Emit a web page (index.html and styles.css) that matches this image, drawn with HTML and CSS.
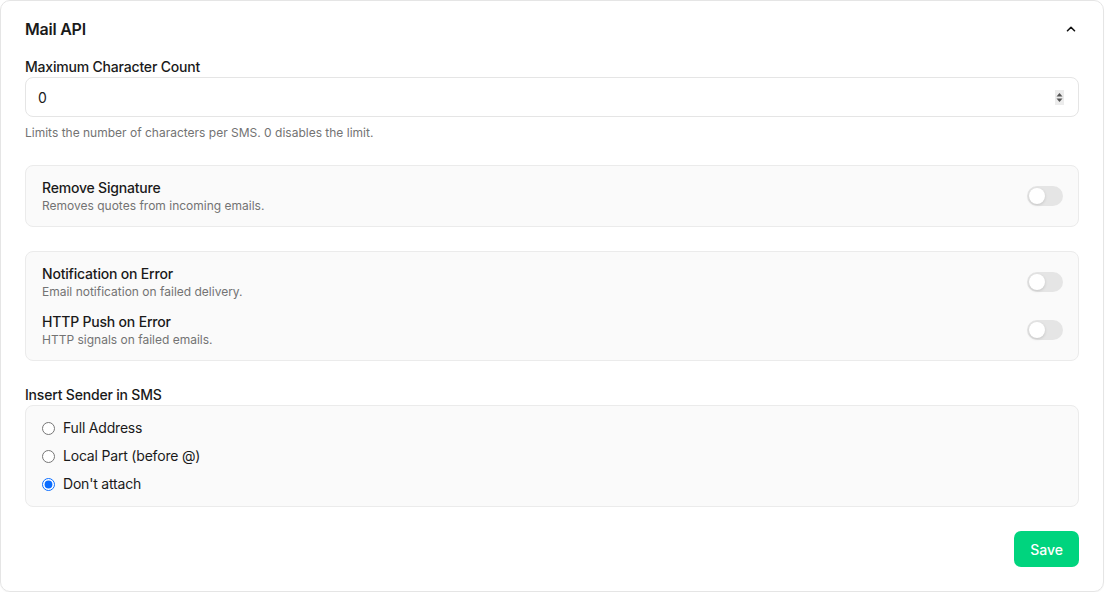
FILE: index.html
```html
<!DOCTYPE html>
<html lang="en">
<head>
<meta charset="utf-8">
<title>Mail API</title>
<link rel="stylesheet" href="styles.css">
</head>
<body>
<section class="card">
  <header class="card-header">
    <h2 class="card-title">Mail API</h2>
    <button class="collapse-btn" type="button" aria-label="Collapse">
      <svg width="12" height="12" viewBox="0 0 12 12" fill="none"><path d="M2.5 7.75 6 4.25l3.5 3.5" stroke="#111" stroke-width="1.6" stroke-linecap="round" stroke-linejoin="round"/></svg>
    </button>
  </header>

  <div class="field">
    <label class="field-label">Maximum Character Count</label>
    <div class="number-input">
      <span class="number-value">0</span>
      <span class="spinner">
        <svg width="9" height="15" viewBox="0 0 9 15"><path d="M4.5 3 7.5 6.5h-6z" fill="#555"/><path d="M4.5 12 1.5 8.5h6z" fill="#555"/></svg>
      </span>
    </div>
    <p class="help">Limits the number of characters per SMS. 0 disables the limit.</p>
  </div>

  <div class="panel">
    <div class="toggle-row">
      <div class="toggle-text">
        <div class="toggle-title">Remove Signature</div>
        <div class="toggle-desc">Removes quotes from incoming emails.</div>
      </div>
      <span class="switch"><span class="knob"></span></span>
    </div>
  </div>

  <div class="panel">
    <div class="toggle-row">
      <div class="toggle-text">
        <div class="toggle-title">Notification on Error</div>
        <div class="toggle-desc">Email notification on failed delivery.</div>
      </div>
      <span class="switch"><span class="knob"></span></span>
    </div>
    <div class="toggle-row">
      <div class="toggle-text">
        <div class="toggle-title">HTTP Push on Error</div>
        <div class="toggle-desc">HTTP signals on failed emails.</div>
      </div>
      <span class="switch"><span class="knob"></span></span>
    </div>
  </div>

  <div class="field">
    <label class="field-label">Insert Sender in SMS</label>
    <div class="panel radio-panel">
      <label class="radio-row"><input type="radio" name="sender"> <span>Full Address</span></label>
      <label class="radio-row"><input type="radio" name="sender"> <span>Local Part (before @)</span></label>
      <label class="radio-row"><input type="radio" name="sender" checked> <span>Don't attach</span></label>
    </div>
  </div>

  <div class="actions">
    <button class="save-btn" type="button">Save</button>
  </div>
</section>
</body>
</html>
```

FILE: styles.css
```css
* { box-sizing: border-box; }

body {
  margin: 0;
  font-family: Inter, "Liberation Sans", sans-serif;
  color: #1a1a1a;
  background: #ffffff;
  letter-spacing: -0.012em;
}

.card {
  width: 1104px;
  border: 1px solid #e5e5e5;
  border-radius: 10px;
  padding: 16px 24px 24px;
  display: flex;
  flex-direction: column;
  gap: 24px;
  box-shadow: 0 1px 1px rgba(0,0,0,0.04);
}

.card-header {
  display: flex;
  align-items: center;
  justify-content: space-between;
  height: 24px;
  margin-bottom: -8px;
}

.card-title {
  margin: 0;
  font-size: 16px;
  line-height: 24px;
  font-weight: 600;
  letter-spacing: -0.015em;
}

.collapse-btn {
  border: 0;
  background: none;
  padding: 0;
  margin-right: 2px;
  width: 12px;
  height: 12px;
  display: flex;
  align-items: center;
  justify-content: center;
}

.field {
  display: flex;
  flex-direction: column;
}

.field-label {
  font-size: 14px;
  line-height: 20px;
  font-weight: 500;
}

.number-input {
  height: 40px;
  border: 1px solid #e5e5e5;
  border-radius: 8px;
  padding: 0 14px 0 12px;
  display: flex;
  align-items: center;
  justify-content: space-between;
  font-size: 14px;
}

.spinner {
  width: 9px;
  height: 15px;
  background: #ececec;
  display: flex;
}

.help {
  margin: 8px 0 0;
  font-size: 12px;
  line-height: 16px;
  color: #737373;
  letter-spacing: 0;
}

.panel {
  background: #fafafa;
  border: 1px solid #ebebeb;
  border-radius: 8px;
  padding: 12px 15px 12px 16px;
  display: flex;
  flex-direction: column;
  gap: 12px;
}

.toggle-row {
  display: flex;
  align-items: center;
  justify-content: space-between;
}

.toggle-title {
  font-size: 14px;
  line-height: 20px;
  font-weight: 500;
}

.toggle-desc {
  font-size: 12px;
  line-height: 16px;
  color: #737373;
  letter-spacing: 0;
}

.switch {
  width: 36px;
  height: 20px;
  border-radius: 10px;
  background: #e5e5e5;
  padding: 2px;
  display: flex;
}

.knob {
  width: 16px;
  height: 16px;
  border-radius: 50%;
  background: #fff;
  box-shadow: 0 1px 3px rgba(0,0,0,0.15);
}

.radio-panel {
  gap: 8px;
}

.radio-row {
  display: flex;
  align-items: center;
  gap: 8px;
  height: 20px;
  font-size: 14px;
  line-height: 20px;
}

.radio-row input {
  margin: 0;
  width: 13px;
  height: 13px;
  accent-color: #0a6cff;
}

.actions {
  display: flex;
  justify-content: flex-end;
}

.save-btn {
  height: 36px;
  padding: 0 16px;
  border: 0;
  border-radius: 7px;
  background: #00d47e;
  color: #fff;
  font-family: inherit;
  font-size: 14px;
  font-weight: 500;
  letter-spacing: 0;
}
```
